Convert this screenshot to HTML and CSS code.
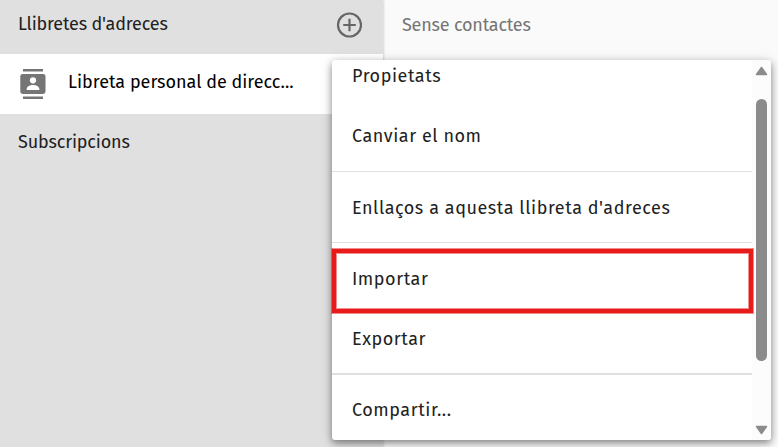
FILE: index.html
```html
<!DOCTYPE html>
<html lang="ca">
<head>
    <meta charset="UTF-8">
    <meta name="viewport" content="width=device-width, initial-scale=1.0">
    <title>Llibretes d'adreces</title>
    <link rel="stylesheet" href="styles.css">
</head>
<body>

    <div class="app">
        <div class="sidebar">
            <div class="sidebar-header">
                <span class="heading">Llibretes d'adreces</span>
                <svg class="add-icon" viewBox="0 0 26 26">
                    <circle cx="13.5" cy="13" r="11.5"/>
                    <path d="M13.5 6.7v12.6M7.2 13h12.6"/>
                </svg>
            </div>
            <div class="book">
                <svg class="book-icon" viewBox="0 0 26 30">
                    <path d="M3 0h20v2.6H3zM3 27.4h20V30H3z"/>
                    <rect x="0.3" y="5" width="25.2" height="20" rx="2.4"/>
                    <circle class="person" cx="13" cy="11.3" r="3.1"/>
                    <path class="person" d="M6.7 21v-1.3c0-2.3 3.6-3.8 6.3-3.8s6.3 1.5 6.3 3.8V21z"/>
                </svg>
                <span class="book-name">Libreta personal de direcc...</span>
            </div>
            <div class="sidebar-section">Subscripcions</div>
        </div>
        <div class="content">
            <span class="empty">Sense contactes</span>
        </div>
    </div>

    <div class="menu">
        <div class="menu-list">
            <div class="menu-item">Propietats</div>
            <div class="menu-item">Canviar el nom</div>
            <div class="divider"></div>
            <div class="menu-item links">Enllaços a aquesta llibreta d'adreces</div>
            <div class="divider"></div>
            <div class="menu-item">Importar</div>
            <div class="menu-item">Exportar</div>
            <div class="divider thick"></div>
            <div class="menu-item">Compartir...</div>
        </div>
        <div class="scrollbar">
            <svg class="arrow" viewBox="0 0 13 10"><path d="M6.5 1.5L11.5 8.5H1.5z"/></svg>
            <div class="thumb"></div>
            <svg class="arrow" viewBox="0 0 13 10"><path d="M6.5 8.5L11.5 1.5H1.5z"/></svg>
        </div>
        <div class="highlight"></div>
    </div>

</body>
</html>
```

FILE: styles.css
```css
* {
    box-sizing: border-box;
}
body {
    margin: 0;
    height: 447px;
    overflow: hidden;
    font-family: "Fira Sans", "Noto Sans", sans-serif;
    font-size: 18px;
    color: #212121;
}
.app {
    display: flex;
    height: 447px;
}
.sidebar {
    width: 383px;
    background-color: #e0e0e0;
    letter-spacing: -0.17px;
    box-shadow: 0 0 3px rgba(0,0,0,0.25);
    z-index: 1;
}
.sidebar-header {
    display: flex;
    justify-content: space-between;
    height: 54px;
    padding: 12px 21px 0 18px;
}
.heading {
    line-height: 24px;
}
.add-icon {
    width: 26px;
    height: 26px;
    fill: none;
    stroke: #666;
    stroke-width: 2.2;
}
.book {
    display: flex;
    height: 60px;
    padding: 15px 0 0 20px;
    background-color: #fff;
    color: #000;
}
.book-icon {
    width: 26px;
    height: 30px;
    margin-right: 22px;
    fill: #757575;
}
.person {
    fill: #fff;
}
.book-name {
    line-height: 26px;
    letter-spacing: 0;
}
.sidebar-section {
    padding: 15px 18px;
    line-height: 26px;
}
.content {
    flex: 1;
    padding: 12px 19px;
    background-color: #fafafa;
    color: #757575;
}
.empty {
    line-height: 26px;
    letter-spacing: -0.2px;
}
.menu {
    position: absolute;
    left: 332px;
    top: 60px;
    z-index: 2;
    display: flex;
    width: 439px;
    height: 380px;
    background-color: #fff;
    border-radius: 3px;
    box-shadow: 0 3px 7px rgba(0,0,0,0.4), 0 2px 14px rgba(0,0,0,0.14);
}
.menu-list {
    width: 420px;
    margin-top: -14px;
}
.menu-item {
    height: 60px;
    padding-left: 20px;
    line-height: 60px;
    letter-spacing: 0.55px;
}
.divider {
    height: 1px;
    margin: 5px 0 6px;
    background-color: #e0e0e0;
}
.divider + .menu-item.links {
    margin-bottom: -1px;
}
.thick {
    height: 2px;
    margin: 4px 0 5px;
}
.scrollbar {
    width: 19px;
    padding: 6px 3px 5px;
    background-color: #fcfcfc;
    border-radius: 0 3px 3px 0;
}
.arrow {
    display: block;
    width: 13px;
    height: 10px;
    fill: #8b8b8b;
    stroke: #8b8b8b;
    stroke-width: 1.5;
    stroke-linejoin: round;
}
.thumb {
    width: 11px;
    height: 262px;
    margin: 23px 1px 64px;
    background-color: #8b8b8b;
    border-radius: 6px;
}
.highlight {
    position: absolute;
    left: 0;
    top: 189px;
    width: 421px;
    height: 64px;
    border: 4px solid #e81b1b;
    box-shadow: 0 0 0 1px rgba(232,27,27,0.5), inset 0 0 0 1px rgba(232,27,27,0.5);
}
```
